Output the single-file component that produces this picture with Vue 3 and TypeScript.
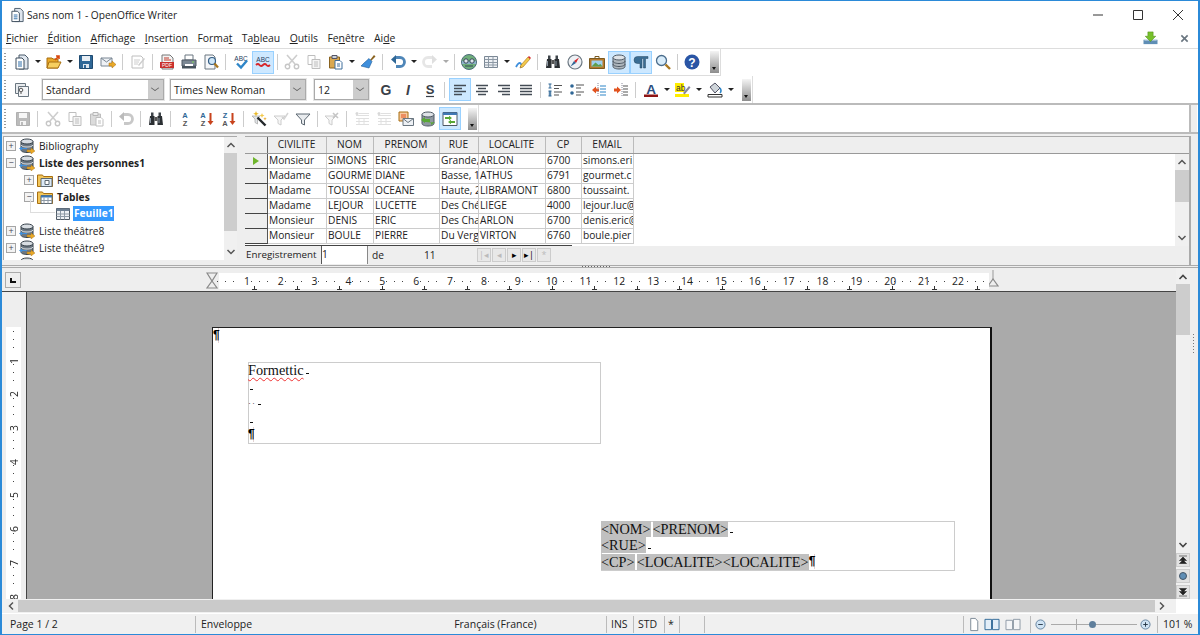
<template>
  <div class="win">
    <svg class="defs" xmlns="http://www.w3.org/2000/svg">
      <symbol id="new" viewBox="0 0 16 16"><path d="M5 1h6l3 3v11H5z" fill="#dfe6ee" stroke="#4a5a6a"/><path d="M2 4h6l2 2v9H2z" fill="#fff" stroke="#3c4c5c"/><path d="M4 8h4M4 10h4M4 12h4" stroke="#2d6ca8"/></symbol>
      <symbol id="open" viewBox="0 0 16 16"><path d="M1 4h5l1 1h5v9H1z" fill="#e9a928" stroke="#a86f10"/><path d="M1 14l2-6h12l-3 6z" fill="#f7cf5f" stroke="#a86f10"/><path d="M9 6l4-4M10 2h3v3" fill="none" stroke="#d9480f" stroke-width="1.6"/></symbol>
      <symbol id="save" viewBox="0 0 16 16"><path d="M1.500 1.500h13v13h-13z" fill="#2f6796" stroke="#1f4a70"/><path d="M4 2h8v5H4z" fill="#e8eef4"/><path d="M5 10h6v4H5z" fill="#dfe6ee"/><path d="M6 11h2v3H6z" fill="#2f6796"/></symbol>
      <symbol id="mail" viewBox="0 0 16 16"><path d="M1 4h11v8H1z" fill="#eef1f5" stroke="#7a8794"/><path d="M1 4l5.500 4L12 4" fill="none" stroke="#7a8794"/><path d="M9 9h3V7l4 3.500-4 3.500v-2H9z" fill="#e9a928" stroke="#a86f10" stroke-width=".5"/></symbol>
      <symbol id="edit" viewBox="0 0 16 16"><path d="M2 2h9l2 2v10H2z" fill="#fff" stroke="#666"/><path d="M4 6h6M4 8h5M4 10h4" stroke="#888"/><path d="M8 11l6-7 1 1-6 7z" fill="#888"/></symbol>
      <symbol id="pdf" viewBox="0 0 16 16"><path d="M3 1h8l3 3v11H3z" fill="#f3f3f3" stroke="#777"/><path d="M5 4h5M5 6h7" stroke="#c0392b"/><path d="M1 8h14v6H1z" fill="#c9302c"/><text x="8" y="13.300" class="svg-t" font-size="5" fill="#fff" text-anchor="middle">PDF</text></symbol>
      <symbol id="print" viewBox="0 0 16 16"><path d="M4 1h8v5H4z" fill="#fff" stroke="#6a7680"/><path d="M1 6h14v6H1z" fill="#7c8894" stroke="#4e5964"/><path d="M1 12h14v2.500H1z" fill="#46525c"/><path d="M4 10h8v2H4z" fill="#fff"/><path d="M11 8h2" stroke="#7ed957"/></symbol>
      <symbol id="preview" viewBox="0 0 16 16"><path d="M2 1h8l2 2v12H2z" fill="#f5f7fa" stroke="#6a7680"/><circle cx="9" cy="7" r="3.500" fill="#cfe6f7" stroke="#355e85" stroke-width="1.200"/><path d="M11.500 9.500l3.500 4" stroke="#a9761d" stroke-width="2.200"/></symbol>
      <symbol id="spell" viewBox="0 0 16 16"><text x="8" y="7" class="svg-t" font-size="6.500" fill="#28405c" text-anchor="middle">ABC</text><path d="M4 9.500l4 4 6-7" fill="none" stroke="#2f86c8" stroke-width="2.400"/></symbol>
      <symbol id="auto" viewBox="0 0 16 16"><text x="8" y="8" class="svg-t" font-size="6.500" fill="#28405c" text-anchor="middle">ABC</text><path d="M1 11q2-2 3.500 0t3.500 0 3.500 0 3.500 0" fill="none" stroke="#d7262b" stroke-width="1.800"/></symbol>
      <symbol id="cut" viewBox="0 0 16 16"><path d="M3 1l8 9M13 1L5 10" stroke="#889" stroke-width="1.600"/><circle cx="3.500" cy="12.500" r="2.200" fill="none" stroke="#778" stroke-width="1.400"/><circle cx="12.500" cy="12.500" r="2.200" fill="none" stroke="#778" stroke-width="1.400"/></symbol>
      <symbol id="copy" viewBox="0 0 16 16"><path d="M2 1.500h7v9H2z" fill="#fff" stroke="#3f6e9c"/><path d="M6 5.500h8v9H6z" fill="#dbe9f6" stroke="#3f6e9c"/><path d="M8 8h4M8 10h4M8 12h4" stroke="#3f6e9c"/></symbol>
      <symbol id="paste" viewBox="0 0 16 16"><path d="M1.500 3h10v11h-10z" fill="#d9a850" stroke="#8a6320"/><path d="M4 1.500h5v3H4z" fill="#ccd3da" stroke="#556"/><path d="M7 6.500h5l2 2v6.500H7z" fill="#fff" stroke="#3f6e9c"/><path d="M9 10h3M9 12h3" stroke="#3f6e9c"/></symbol>
      <symbol id="brush" viewBox="0 0 16 16"><path d="M10 6l4-5 1.500 1.500-4.500 4.500z" fill="#8a6320"/><path d="M9 4.500l3 3-3 6.500-8-2 3-3z" fill="#3f8fdc" stroke="#1f5c98" stroke-width=".6"/></symbol>
      <symbol id="undo" viewBox="0 0 16 16"><path d="M5 3.500h5a4.500 4.500 0 0 1 0 9H6" fill="none" stroke="#4f86b8" stroke-width="2.800"/><path d="M1 5.500l5-4.500v9z" fill="#2f6796"/></symbol>
      <symbol id="redo" viewBox="0 0 16 16"><path d="M11 3.500H6a4.500 4.500 0 0 0 0 9h4" fill="none" stroke="#c4c4c4" stroke-width="2.800"/><path d="M15 5.500L10 1v9z" fill="#b5b5b5"/></symbol>
      <symbol id="globe" viewBox="0 0 16 16"><circle cx="8" cy="8" r="7.500" fill="#6fae7a" stroke="#4c6a7a"/><path d="M1 7h14v3H1z" fill="#8db4c8"/><circle cx="5" cy="7" r="2.200" fill="#dfe6ee" stroke="#345"/><circle cx="11" cy="7" r="2.200" fill="#dfe6ee" stroke="#345"/><path d="M4 12h8" stroke="#345"/></symbol>
      <symbol id="table" viewBox="0 0 16 16"><path d="M1.500 2.500h13v11h-13z" fill="#eef1f5" stroke="#7a8794"/><path d="M1.500 5.500h13M1.500 8.500h13M1.500 11h13M5.500 2.500v11M10 2.500v11" stroke="#8d99a5" fill="none"/></symbol>
      <symbol id="draw" viewBox="0 0 16 16"><path d="M1 13q3-6 5-3t-1 3" fill="none" stroke="#3f8fdc" stroke-width="1.800"/><path d="M6 11l7-8 2 2-7 8-3 1z" fill="#f2c94c" stroke="#a86f10" stroke-width=".6"/><path d="M13 3l1-1 2 2-1 1z" fill="#d7262b"/></symbol>
      <symbol id="find" viewBox="0 0 16 16"><path d="M2 5h4.500v9H1zM9.500 5H14l1 9H9.500z" fill="#2b2f33"/><path d="M3 1.500h2.500V5H3zM10.500 1.500H13V5h-2.500z" fill="#3e444a"/><path d="M6.500 6h3v4h-3z" fill="#555"/><path d="M2.500 7v5M11 7v5" stroke="#8d99a5"/></symbol>
      <symbol id="nav" viewBox="0 0 16 16"><circle cx="8" cy="8" r="7" fill="#eef1f5" stroke="#6a7680" stroke-width="1.200"/><path d="M12 3.500L9 9 7 7z" fill="#d7262b"/><path d="M3.500 12.500L9 9 7 7z" fill="#2f6796"/></symbol>
      <symbol id="pic" viewBox="0 0 16 16"><path d="M6 2.500h4v2H6z" fill="#fff" stroke="#7a5a20"/><path d="M.5 4.500h15v10H.5z" fill="#b8792c" stroke="#7a5a20"/><path d="M2.500 6.500h11v6h-11z" fill="#9ed0ef"/><path d="M2.500 12.500l4-4 3 2.500 2-1 2 2.500z" fill="#5f9e4b"/></symbol>
      <symbol id="db" viewBox="0 0 16 16"><path d="M2 3.500v9c0 1.500 2.500 2.500 6 2.500s6-1 6-2.500v-9z" fill="#aeb6bd" stroke="#4e5964"/><ellipse cx="8" cy="3.500" rx="6" ry="2.500" fill="#dfe3e7" stroke="#4e5964"/><path d="M2 7c0 1.500 2.500 2.500 6 2.500S14 8.500 14 7M2 10c0 1.500 2.500 2.500 6 2.500s6-1 6-2.500" fill="none" stroke="#4e5964"/></symbol>
      <symbol id="pil" viewBox="0 0 16 16"><path d="M7 2.500H4.500a3.500 3.500 0 0 0 0 7H7V14h2V4.500h1.500V14h2V4.500H15v-2z" fill="#3a6d94" stroke="#27465f" stroke-width=".5"/></symbol>
      <symbol id="zoom" viewBox="0 0 16 16"><circle cx="6.500" cy="6.500" r="5" fill="#d8ecfa" stroke="#4b6d8c" stroke-width="1.300"/><path d="M10.500 10.500l4.500 4.500" stroke="#a9761d" stroke-width="2.400"/></symbol>
      <symbol id="help" viewBox="0 0 16 16"><circle cx="8" cy="8" r="7.500" fill="#2a55a5"/><text x="8" y="12.500" class="svg-t" font-size="12" font-weight="700" fill="#fff" text-anchor="middle">?</text></symbol>
      <symbol id="style" viewBox="0 0 16 16"><path d="M1.500 1.500h10v10h-10z" fill="#e8ebee" stroke="#6a7680"/><path d="M4.500 4.500h10v10h-10z" fill="#f4f5f7" stroke="#6a7680"/><circle cx="7" cy="8" r="1.800" fill="none" stroke="#555"/><path d="M7 10v2" stroke="#555"/></symbol>
      <symbol id="bold" viewBox="0 0 16 16"><text x="8" y="13" class="svg-t" font-size="14" font-weight="700" fill="#3a4048" text-anchor="middle">G</text></symbol>
      <symbol id="ital" viewBox="0 0 16 16"><text x="8" y="13" class="svg-t" font-size="14" font-style="italic" font-weight="700" fill="#3a4048" text-anchor="middle">I</text></symbol>
      <symbol id="stk" viewBox="0 0 16 16"><text x="8" y="12" class="svg-t" font-size="13" font-weight="700" fill="#3a4048" text-anchor="middle">S</text><path d="M4 14.500h8" stroke="#3a4048" stroke-width="1.200"/></symbol>
      <symbol id="al" viewBox="0 0 16 16"><path d="M2 3.500h12M2 6.500h8M2 9.500h12M2 12.500h8" stroke="#444c55" stroke-width="1.300"/></symbol>
      <symbol id="ac" viewBox="0 0 16 16"><path d="M2 3.500h12M4 6.500h8M2 9.500h12M4 12.500h8" stroke="#444c55" stroke-width="1.300"/></symbol>
      <symbol id="ar" viewBox="0 0 16 16"><path d="M2 3.500h12M6 6.500h8M2 9.500h12M6 12.500h8" stroke="#444c55" stroke-width="1.300"/></symbol>
      <symbol id="aj" viewBox="0 0 16 16"><path d="M2 3.500h12M2 6.500h12M2 9.500h12M2 12.500h12" stroke="#444c55" stroke-width="1.300"/></symbol>
      <symbol id="num" viewBox="0 0 16 16"><path d="M1.500 2h3M3 2v4M1.500 6h3M1.500 9h3M1.500 14h3M2.300 9v5M3.700 9v5" stroke="#2f6796" fill="none"/><path d="M7 3.500h8M7 6.500h5M7 10h8M7 13h5" stroke="#555" stroke-width="1.200"/></symbol>
      <symbol id="bul" viewBox="0 0 16 16"><circle cx="3" cy="4" r="1.800" fill="#2f6796"/><circle cx="3" cy="11" r="1.800" fill="#2f6796"/><path d="M7 3h8M7 6h5M7 10h8M7 13h5" stroke="#555" stroke-width="1.200"/></symbol>
      <symbol id="out" viewBox="0 0 16 16"><path d="M1 8l4-3.500v2h3v3H5v2z" fill="#e2531f"/><path d="M9 4h6M9 7h6M9 10h6M9 13h6" stroke="#2f86c8" stroke-width="1.200"/><path d="M7 1v14" stroke="#889" stroke-dasharray="1 1"/></symbol>
      <symbol id="ind" viewBox="0 0 16 16"><path d="M8 8L4 4.500v2H1v3h3v2z" fill="#e2531f"/><path d="M10 4h5M10 7h5M10 10h5M10 13h5" stroke="#555" stroke-width="1.200"/><path d="M9 1v14" stroke="#889" stroke-dasharray="1 1"/></symbol>
      <symbol id="color" viewBox="0 0 16 16"><text x="8" y="11.500" class="svg-t" font-size="13.500" font-weight="700" fill="#2b4c7e" text-anchor="middle">A</text><path d="M1 12.500h14V15H1z" fill="#8e1414"/></symbol>
      <symbol id="hl" viewBox="0 0 16 16"><path d="M0 12h14v3H0z" fill="#ffee00"/><path d="M0 1h9v9H0z" fill="#ffee00"/><text x="1" y="9" class="svg-t" font-size="8.500" fill="#333">ab</text><path d="M8 11l6-7 1.500 1.500-6 7z" fill="#889"/></symbol>
      <symbol id="bg" viewBox="0 0 16 16"><path d="M3 5l5-4 5 5-5 5z" fill="#cfd5da" stroke="#556"/><path d="M13 6q2 3 0 5" stroke="#2f86c8" stroke-width="1.600" fill="none"/><path d="M1 12.500h14V15H1z" fill="#fff" stroke="#333"/></symbol>
      <symbol id="saz" viewBox="0 0 16 16"><text x="8" y="7" class="svg-t" font-size="7.500" font-weight="700" fill="#2f6796" text-anchor="middle">A</text><text x="8" y="15" class="svg-t" font-size="7.500" font-weight="700" fill="#555" text-anchor="middle">Z</text></symbol>
      <symbol id="sad" viewBox="0 0 16 16"><text x="4" y="7" class="svg-t" font-size="7.500" font-weight="700" fill="#2f6796" text-anchor="middle">A</text><text x="4" y="15" class="svg-t" font-size="7.500" font-weight="700" fill="#555" text-anchor="middle">Z</text><path d="M10.500 2h2v8h2l-3 4-3-4h2z" fill="#c8431d"/></symbol>
      <symbol id="sda" viewBox="0 0 16 16"><text x="4" y="7" class="svg-t" font-size="7.500" font-weight="700" fill="#2f6796" text-anchor="middle">Z</text><text x="4" y="15" class="svg-t" font-size="7.500" font-weight="700" fill="#555" text-anchor="middle">A</text><path d="M10.500 2h2v8h2l-3 4-3-4h2z" fill="#c8431d"/></symbol>
      <symbol id="wand" viewBox="0 0 16 16"><path d="M1 5h8L6.500 8v5L4 11.500V8z" fill="#e2e5e8" stroke="#999" stroke-width=".6"/><path d="M6.500 6.500l8 8" stroke="#23272b" stroke-width="2.400"/><path d="M5 0l.8 2 2 .8-2 .8L5 5.500l-.8-1.900-2-.8 2-.8z" fill="#e9b928"/><path d="M11 2l.7 1.800 1.800.7-1.800.7L11 7l-.7-1.800-1.800-.7 1.800-.7z" fill="#f2c94c"/><path d="M14 6l.5 1.200 1.200.5-1.200.5-.5 1.200-.5-1.200-1.200-.5 1.200-.5z" fill="#e9a928"/></symbol>
      <symbol id="filt" viewBox="0 0 16 16"><path d="M1 3h14l-5.500 6v5l-3-1.500V9z" fill="#e8ebee" stroke="#5d6872"/></symbol>
      <symbol id="filtc" viewBox="0 0 16 16"><path d="M1 5h11L8 9v5l-3-1.500V9z" fill="#e8ebee" stroke="#888"/><path d="M9 6l2 2 4-6" fill="none" stroke="#999" stroke-width="1.500"/></symbol>
      <symbol id="filtx" viewBox="0 0 16 16"><path d="M1 5h11L8 9v5l-3-1.500V9z" fill="#e8ebee" stroke="#888"/><path d="M9 2l5 5M14 2L9 7" stroke="#777" stroke-width="1.600"/></symbol>
      <symbol id="list1" viewBox="0 0 16 16"><circle cx="3" cy="2.500" r="1.500" fill="#9aa5af"/><path d="M2 4.500h13M2 7.500h13M2 10.500h13M2 13.500h13M5 7.500v6M10 7.500v6" stroke="#b0b8c0"/><path d="M5 2.500h10" stroke="#b0b8c0"/></symbol>
      <symbol id="merge" viewBox="0 0 16 16"><path d="M1 1h9v9H1z" fill="#f7c9a0" stroke="#a86f10"/><path d="M3 4h5M3 6h5" stroke="#e2531f"/><path d="M5 7.500h10.500v7H5z" fill="#eef1f5" stroke="#6a7680"/><path d="M5 7.500l5 4 5.500-4" fill="none" stroke="#6a7680"/></symbol>
      <symbol id="dbg" viewBox="0 0 16 16"><path d="M2 3.500v9c0 1.500 2.500 2.500 6 2.500s6-1 6-2.500v-9z" fill="#8f98a0" stroke="#4e5964"/><ellipse cx="8" cy="3.500" rx="6" ry="2.500" fill="#dfe3e7" stroke="#4e5964"/><path d="M1 9l4-3v2h5v3H5v1zM15 11l-4 3v-2H6" fill="#59a836"/></symbol>
      <symbol id="togg" viewBox="0 0 16 16"><path d="M1 1.500h14v13H1z" fill="#fff" stroke="#4e5964"/><path d="M1 1.500h14v2.500H1z" fill="#3f78b5"/><path d="M3 6h4V4.800L10 7 7 9.200V8H3zM13 10H9V8.800L6 11l3 2.200V12h4z" fill="#59a836"/></symbol>
      <symbol id="dl" viewBox="0 0 16 16"><path d="M0 10h16v5H0z" fill="#5f8eb5"/><path d="M1 10.500h14" stroke="#c6d8e6"/><path d="M5 1h6v5h3l-6 6-6-6h3z" fill="#77c02c" stroke="#4d8a13" stroke-width=".6"/></symbol>
      <symbol id="tdb" viewBox="0 0 16 16"><path d="M2 3.500v8.500c0 1.500 2.500 2.500 6 2.500s6-1 6-2.500V3.500z" fill="#6d7882" stroke="#38424b"/><ellipse cx="8" cy="3.500" rx="6" ry="2.500" fill="#d9dee3" stroke="#38424b"/><path d="M2 7c1 1.500 3 2 6 2s5-.5 6-2" fill="none" stroke="#d9dee3"/><path d="M8 12h4v-2l4 3-4 3v-2H8z" fill="#e9a928" stroke="#a86f10" stroke-width=".4"/><path d="M8 10H3V8.500L0 10.500 3 12.500V11h5z" fill="#3f8fdc"/></symbol>
      <symbol id="fq" viewBox="0 0 16 16"><path d="M.5 3h5l1 1.500h9v10H.5z" fill="#f2c65a" stroke="#a86f10"/><path d="M4 6.500h11v8H4z" fill="#dbe9f6" stroke="#5d6872"/><path d="M8 8.500h4v4H8z" fill="#fff" stroke="#5d6872"/></symbol>
      <symbol id="ft" viewBox="0 0 16 16"><path d="M.5 3h5l1 1.500h9v10H.5z" fill="#f2c65a" stroke="#a86f10"/><path d="M4 6.500h11v8H4z" fill="#fff" stroke="#5d6872"/><path d="M4 6.500h11v2H4z" fill="#3f78b5"/><path d="M7 8.500v6M11 8.500v6M4 11.500h11" stroke="#8d99a5"/></symbol>
      <symbol id="fsheet" viewBox="0 0 16 16"><path d="M1.500 2.500h13v11h-13z" fill="#eef1f5" stroke="#4e5964"/><path d="M1.500 2.500h13v2.500h-13z" fill="#6d7f92"/><path d="M1.500 8h13M1.500 10.500h13M5.500 5v8.500M9.500 5v8.500" stroke="#8d99a5"/></symbol>
      <symbol id="page1" viewBox="0 0 16 16"><path d="M4.500 1.500h5l2.500 3v10H4.500z" fill="#fff" stroke="#7a8794"/></symbol>
      <symbol id="page2" viewBox="0 0 16 16"><path d="M.5 2.500h7v11h-7zM8.500 2.500h7v11h-7z" fill="#e3eef8" stroke="#2f6796"/></symbol>
      <symbol id="page3" viewBox="0 0 16 16"><path d="M.5 3.500h7v10h-7zM8.500 2.500h7v11h-7z" fill="#f4f5f7" stroke="#8d99a5"/></symbol>
    </svg>

    <header class="titlebar">
      <svg class="title-ic"><use href="#new" /></svg>
      <span class="title-txt">Sans nom 1 - OpenOffice Writer</span>
      <div class="winctl">
        <svg viewBox="0 0 12 12"><path d="M1 6h10" stroke="#333" /></svg>
        <svg viewBox="0 0 12 12"><path d="M1.500 1.500h9v9h-9z" fill="none" stroke="#333" /></svg>
        <svg viewBox="0 0 12 12"><path d="M1 1l10 10M11 1L1 11" stroke="#333" /></svg>
      </div>
    </header>

    <nav class="menubar">
      <span v-for="m in menus" :key="m.a + m.k" class="menu">{{ m.a }}<u>{{ m.k }}</u>{{ m.b }}</span>
      <svg class="menu-dl"><use href="#dl" /></svg>
      <svg class="menu-close" viewBox="0 0 10 10"><path d="M1.500 1.500l7 7M8.500 1.500l-7 7" stroke="#6a7680" stroke-width="1.800" /></svg>
    </nav>

    <div class="tbrow tb1">
      <div class="toolbar">
        <i class="grip"></i>
        <template v-for="(it, n) in bar1" :key="n">
          <span v-if="it.kind === 'sep'" class="sep"></span>
          <span v-else-if="it.kind === 'arrow'" class="arrow" :class="{ off: it.off }"></span>
          <span v-else class="btn" :class="{ on: it.on, off: it.off }"><svg><use :href="'#' + it.name" /></svg></span>
        </template>
        <span class="handle"></span>
      </div>
    </div>

    <div class="tbrow tb2">
      <div class="toolbar">
        <i class="grip"></i>
        <span class="btn"><svg><use href="#style" /></svg></span>
        <div class="combo c-style">Standard<span class="combo-btn"></span></div>
        <div class="combo c-font">Times New Roman<span class="combo-btn"></span></div>
        <div class="combo c-size">12<span class="combo-btn"></span></div>
        <template v-for="(it, n) in bar2" :key="n">
          <span v-if="it.kind === 'sep'" class="sep"></span>
          <span v-else-if="it.kind === 'arrow'" class="arrow"></span>
          <span v-else class="btn" :class="{ on: it.on }"><svg><use :href="'#' + it.name" /></svg></span>
        </template>
        <span class="handle"></span>
      </div>
    </div>

    <div class="tbrow tb3">
      <div class="toolbar">
        <i class="grip"></i>
        <template v-for="(it, n) in bar3" :key="n">
          <span v-if="it.kind === 'sep'" class="sep"></span>
          <span v-else class="btn" :class="{ on: it.on, off: it.off }"><svg><use :href="'#' + it.name" /></svg></span>
        </template>
        <span class="handle"></span>
      </div>
      <span class="tb3-end"></span>
    </div>

    <section class="beamer">
      <div class="tree">
        <div class="tree-list">
          <div v-for="(r, n) in tree" :key="n" class="tree-row" :class="['lv' + r.level, { strong: r.strong }]">
            <span v-if="r.exp" class="exp">{{ r.exp }}</span>
            <svg class="tree-ic"><use :href="'#' + r.icon" /></svg>
            <span v-if="r.label" class="tree-lbl" :class="{ sel: r.sel }">{{ r.label }}</span>
          </div>
        </div>
        <div class="sb">
          <svg class="chev" viewBox="0 0 10 10"><path d="M1.500 7L5 3.500 8.500 7" fill="none" stroke="#555" stroke-width="1.500" /></svg>
          <span class="sb-thumb tree-thumb"></span>
          <svg class="chev end" viewBox="0 0 10 10"><path d="M1.500 3L5 6.500 8.500 3" fill="none" stroke="#555" stroke-width="1.500" /></svg>
        </div>
      </div>

      <div class="grid">
        <div class="grid-head">
          <div class="gr">
            <span class="hcell"></span>
            <span v-for="c in cols" :key="c" class="hcell">{{ c }}</span>
          </div>
        </div>
        <div class="grid-body">
          <div class="rows">
            <div v-for="(row, n) in rows" :key="n" class="gr">
              <span class="handle-cell"><i v-if="n === 0" class="cur"></i></span>
              <span v-for="(v, k) in row" :key="k" class="cell">{{ v }}</span>
            </div>
            <div class="rows-line"></div>
          </div>
          <div class="sb grid-sb">
            <svg class="chev" viewBox="0 0 10 10"><path d="M1.500 7L5 3.500 8.500 7" fill="none" stroke="#555" stroke-width="1.500" /></svg>
            <span class="sb-thumb grid-thumb"></span>
            <svg class="chev end" viewBox="0 0 10 10"><path d="M1.500 3L5 6.500 8.500 3" fill="none" stroke="#555" stroke-width="1.500" /></svg>
          </div>
        </div>
        <div class="recnav">
          <span class="rec-lbl">Enregistrement</span>
          <span class="rec-input">1</span>
          <span class="rec-de">de</span>
          <span class="rec-n">11</span>
          <div class="rec-btns">
            <span class="off">|◂</span><span class="off">◂</span><span>▸</span><span>▸|</span><span class="off">*</span>
          </div>
        </div>
      </div>
      <span class="beamer-r"></span>
    </section>

    <div class="sash"><i></i></div>

    <div class="edit">
      <div class="edit-main">
        <div class="hruler-row">
          <span class="corner"><i></i></span>
          <svg class="hg" viewBox="0 0 12 18"><path d="M1 1h10L6 9zM6 9l5 7H1z" fill="#eee" stroke="#8a8a8a" stroke-width="1.200" /></svg>
          <div class="hruler">
            <div v-for="n in 22" :key="n" class="hcellr">
              <i></i><i></i><i></i>
              <span>{{ n }}</span>
            </div>
            <div class="hcellr tail"><i></i><i></i><i></i></div>
            <span v-for="x in tabs" :key="x" class="tab" :style="{ left: x + 'px' }"></span>
          </div>
          <svg class="hg-end" viewBox="0 0 12 18"><path d="M6 0v10" stroke="#999" /><path d="M1 16l5-7 5 7z" fill="#eee" stroke="#8a8a8a" stroke-width="1.200" /></svg>
        </div>
        <div class="work">
          <div class="vruler-col">
            <div class="vruler">
              <div v-for="n in 8" :key="n" class="vcell">
                <i></i><i></i><i></i>
                <span>{{ n }}</span>
              </div>
            </div>
          </div>
          <div class="doc">
            <div class="page">
              <div class="page-mark"><span class="pil">¶</span></div>
              <div class="frame f1">
                <p><span class="squig">Formettic</span><b class="brk"></b></p>
                <p><b class="brk"></b></p>
                <p class="dots">··<b class="brk"></b></p>
                <p><b class="brk"></b></p>
                <p><span class="pil">¶</span></p>
              </div>
              <div class="frame f2">
                <p><span class="fld">&lt;NOM&gt;</span><span class="spc"> </span><span class="fld">&lt;PRENOM&gt;</span><b class="brk"></b></p>
                <p><span class="fld">&lt;RUE&gt;</span><b class="brk"></b></p>
                <p><span class="fld">&lt;CP&gt;</span><span class="spc"> </span><span class="fld">&lt;LOCALITE&gt;&lt;LOCALITE&gt;</span><span class="pil">¶</span></p>
              </div>
            </div>
          </div>
        </div>
      </div>
      <div class="vsb">
        <svg class="chev" viewBox="0 0 10 10"><path d="M1.500 7L5 3.500 8.500 7" fill="none" stroke="#444" stroke-width="1.600" /></svg>
        <span class="sb-thumb vthumb"></span>
        <svg class="chev end" viewBox="0 0 10 10"><path d="M1.500 3L5 6.500 8.500 3" fill="none" stroke="#444" stroke-width="1.600" /></svg>
        <span class="pgbtn"><svg viewBox="0 0 10 10"><path d="M1 1h8M5 2L1.500 5.500h7zM5 5L1.500 8.500h7z" fill="#222" stroke="#222" stroke-width=".6" /></svg></span>
        <span class="pgbtn"><svg viewBox="0 0 10 10"><circle cx="5" cy="5" r="3.500" fill="#5f8eb5" stroke="#456" /></svg></span>
        <span class="pgbtn"><svg viewBox="0 0 10 10"><path d="M1 9h8M5 8L1.500 4.500h7zM5 5L1.500 1.500h7z" fill="#222" stroke="#222" stroke-width=".6" /></svg></span>
      </div>
      <div class="edge"><i></i></div>
    </div>

    <div class="hscroll">
      <svg class="chev" viewBox="0 0 10 10"><path d="M7 1.500L3.500 5 7 8.500" fill="none" stroke="#555" stroke-width="1.500" /></svg>
      <span class="hs-track"></span>
      <svg class="chev" viewBox="0 0 10 10"><path d="M3 1.500L6.500 5 3 8.500" fill="none" stroke="#555" stroke-width="1.500" /></svg>
    </div>

    <footer class="status">
      <span class="st st-page">Page 1 / 2</span>
      <span class="st st-style">Enveloppe<em>Français (France)</em></span>
      <span class="st st-ins">INS</span>
      <span class="st st-std">STD</span>
      <span class="st st-star">*</span>
      <span class="st st-blank"></span>
      <span class="st st-big"></span>
      <span class="st st-views">
        <svg><use href="#page1" /></svg><svg class="v2"><use href="#page2" /></svg><svg class="v3"><use href="#page3" /></svg>
      </span>
      <span class="st st-zoom">
        <svg class="zbtn" viewBox="0 0 12 12"><circle cx="6" cy="6" r="5" fill="#cfe3f4" stroke="#5f7f9c" /><path d="M3.500 6h5" stroke="#234" /></svg>
        <span class="slider"><i class="mid"></i><i class="knob"></i></span>
        <svg class="zbtn" viewBox="0 0 12 12"><circle cx="6" cy="6" r="5" fill="#cfe3f4" stroke="#5f7f9c" /><path d="M3.500 6h5M6 3.500v5" stroke="#234" /></svg>
      </span>
      <span class="st st-pct">101 %</span>
    </footer>
  </div>
</template>

<script setup lang="ts">
type Item = { kind: 'btn' | 'sep' | 'arrow'; name: string; on: boolean; off: boolean }

// compact toolbar notation: "|" separator, "v" dropdown, "!" pressed, "~" greyed out
function parseBar(src: string): Item[] {
  return src.split(' ').map((tok) => {
    if (tok === '|') return { kind: 'sep', name: '', on: false, off: false }
    if (tok === 'v' || tok === 'v~') return { kind: 'arrow', name: '', on: false, off: tok === 'v~' }
    return { kind: 'btn', name: tok.replace(/[!~]/g, ''), on: tok.endsWith('!'), off: tok.endsWith('~') }
  })
}

const bar1 = parseBar('new v open v save mail | edit~ | pdf print preview | spell auto! | cut~ copy~ paste v brush | undo v redo~ v~ | globe table v draw | find nav pic db! pil! zoom | help')
const bar2 = parseBar('bold ital stk | al! ac ar aj | num bul out ind | color v hl v bg v')
const bar3 = parseBar('save~ | cut~ copy~ paste~ | undo~ | find | saz sad sda | wand filtc~ filt | filtx~ | list1~ list1~ merge dbg togg!')

const menus = [
  { a: '', k: 'F', b: 'ichier' },
  { a: '', k: 'É', b: 'dition' },
  { a: '', k: 'A', b: 'ffichage' },
  { a: '', k: 'I', b: 'nsertion' },
  { a: 'Forma', k: 't', b: '' },
  { a: 'Ta', k: 'b', b: 'leau' },
  { a: '', k: 'O', b: 'utils' },
  { a: 'Fe', k: 'n', b: 'être' },
  { a: 'Ai', k: 'd', b: 'e' },
]

const tree = [
  { label: 'Bibliography', level: 0, exp: '+', icon: 'tdb' },
  { label: 'Liste des personnes1', level: 0, exp: '−', icon: 'tdb', strong: true },
  { label: 'Requêtes', level: 1, exp: '+', icon: 'fq' },
  { label: 'Tables', level: 1, exp: '−', icon: 'ft', strong: true },
  { label: 'Feuille1', level: 2, icon: 'fsheet', strong: true, sel: true },
  { label: 'Liste théâtre8', level: 0, exp: '+', icon: 'tdb' },
  { label: 'Liste théâtre9', level: 0, exp: '+', icon: 'tdb' },
  // next row is scrolled out: only the top of its icon shows
  { label: '', level: 0, icon: 'tdb' },
]

const cols = ['CIVILITE', 'NOM', 'PRENOM', 'RUE', 'LOCALITE', 'CP', 'EMAIL']
// values as far as the narrow columns show them
const rows = [
  ['Monsieur', 'SIMONS', 'ERIC', 'Grande,', 'ARLON', '6700', 'simons.eri'],
  ['Madame', 'GOURME', 'DIANE', 'Basse, 1', 'ATHUS', '6791', 'gourmet.c'],
  ['Madame', 'TOUSSAI', 'OCEANE', 'Haute, 2', 'LIBRAMONT', '6800', 'toussaint.'],
  ['Madame', 'LEJOUR', 'LUCETTE', 'Des Ché', 'LIEGE', '4000', 'lejour.luc@'],
  ['Monsieur', 'DENIS', 'ERIC', 'Des Cha', 'ARLON', '6700', 'denis.eric@'],
  ['Monsieur', 'BOULE', 'PIERRE', 'Du Verg', 'VIRTON', '6760', 'boule.pier'],
]

// tab stops drawn under the horizontal ruler, relative to its white strip
const tabs = Array.from({ length: 18 }, (_, n) => Math.round(33 + n * 42.5))
</script>

<style>
html, body { margin: 0; background: #fff; }
</style>

<style scoped>
.win {
  width: 1200px;
  height: 635px;
  box-sizing: border-box;
  border-top: 1px solid #2b8ad8;
  border-left: 2px solid #2b8ad8;
  border-right: 2px solid #2b8ad8;
  border-bottom: 1px solid #2b8ad8;
  background: #fff;
  display: flex;
  flex-direction: column;
  overflow: hidden;
  font-family: "Open Sans", "Noto Sans", sans-serif;
  font-size: 10.500px;
  color: #222;
}
.defs { display: none; }
.svg-t { font-family: "Liberation Sans", sans-serif; }

.titlebar { height: 27px; display: flex; align-items: center; padding-left: 8px; flex: none; }
.title-ic { width: 15px; height: 16px; }
.title-txt { margin-left: 2px; font-size: 10.200px; color: #222; }
.winctl { margin-left: auto; display: flex; margin-right: 14px; gap: 28px; }
.winctl svg { width: 12px; height: 12px; }

.menubar { height: 20px; box-sizing: content-box; flex: none; display: flex; align-items: center; padding-left: 4px; gap: 9.400px; border-bottom: 1px solid #ddd; }
.menu { font-size: 10.400px; color: #222; }
.menu u { text-decoration: underline; }
.menu-dl { width: 15px; height: 14px; margin-left: auto; }
.menu-close { width: 9px; height: 9px; margin-left: 13px; margin-right: 9px; }

.tbrow { display: flex; flex: none; }
.tb1 { height: 27px; }
.tb2 { height: 29px; }
.tb3 { height: 29px; }
.toolbar { display: flex; align-items: center; position: relative; box-sizing: border-box; padding-left: 9px; }
.tb1 .toolbar { width: 719px; border-right: 1px solid #ddd; border-bottom: 1px solid #ddd; }
.tb2 { border-bottom: 2px solid #bbb; box-sizing: border-box; }
.tb2 .toolbar { width: 751px; border-right: 1px solid #ddd; }
.tb3 { border-bottom: 2px solid #bbb; box-sizing: border-box; }
.tb3 .toolbar { width: 477px; border-right: 1px solid #ddd; padding-left: 10px; }
.tb3-end { margin-left: auto; width: 6px; margin-right: 1px; border-left: 2px solid #bbb; background: #eee; }

.grip { position: absolute; left: 2px; top: 4px; bottom: 4px; width: 2px; background: repeating-linear-gradient(#999 0 1px, transparent 1px 3px); }
.btn { width: 22px; height: 23px; display: flex; align-items: center; justify-content: center; flex: none; box-sizing: border-box; }
.btn svg { width: 16px; height: 16px; }
.btn.on { background: #cde8ff; border: 1px solid #99d1ff; }
.btn.off svg { opacity: .42; filter: grayscale(1); }
.sep { width: 7.500px; height: 20px; flex: none; position: relative; }
.sep::before { content: ""; position: absolute; left: 3px; top: 2px; bottom: 2px; width: 1px; background: #ccc; }
.arrow { width: 10px; height: 20px; flex: none; position: relative; }
.arrow::before { content: ""; position: absolute; left: 2px; top: 8px; border: 3px solid transparent; border-top: 3.500px solid #222; border-bottom: 0; }
.arrow.off::before { border-top-color: #aaa; }
.handle { width: 9px; height: 22px; margin-left: auto; margin-right: 1px; background: linear-gradient(#f4f4f4, #8d8d8d); position: relative; flex: none; }
.handle::after { content: ""; position: absolute; left: 2px; bottom: 3px; border: 2.500px solid transparent; border-top: 3px solid #111; border-bottom: 0; }

.combo { height: 21px; box-sizing: border-box; border: 1px solid #aaa; box-shadow: 0 0 0 1px #e6e6e6; display: flex; align-items: center; justify-content: space-between; padding-left: 3px; font-size: 10.500px; flex: none; }
.c-style { width: 122px; margin-left: 9px; }
.c-font { width: 136px; margin-left: 6px; }
.c-size { width: 55px; margin-left: 8px; margin-right: 6px; }
.combo-btn { width: 15px; height: 100%; background: #ccc; position: relative; flex: none; }
.combo-btn::after { content: ""; position: absolute; left: 4px; top: 5px; width: 5px; height: 5px; border-right: 1px solid #666; border-bottom: 1px solid #666; transform: scale(1, .7) rotate(45deg); }

.beamer { height: 131px; flex: none; display: flex; background: #eee; box-sizing: border-box; padding-top: 2px; }
.tree { width: 234px; margin-left: 1px; height: 124px; display: flex; background: #fff; border-top: 1px solid #aaa; border-left: 1px solid #aaa; box-sizing: border-box; flex: none; }
.tree-list { flex: 1; overflow: hidden; }
.tree-row { height: 17px; display: flex; align-items: center; position: relative; font-size: 10.200px; }
.tree-row.strong { font-weight: 700; }
.tree-row.lv0 { padding-left: 15px; }
.tree-row.lv1 { padding-left: 33px; }
.tree-row.lv2 { padding-left: 51px; }
.lv2::before { content: ""; position: absolute; left: 26px; top: -6px; width: 24px; height: 13px; border-left: 1px solid #ddd; border-bottom: 1px solid #ddd; }
.exp { position: absolute; top: 4px; width: 8px; height: 8px; border: 1px solid #a5a5a5; background: #f3f3f3; color: #445; font-size: 9px; line-height: 8px; text-align: center; font-weight: 400; }
.lv0 .exp { left: 2px; }
.lv1 .exp { left: 20px; }
.tree-ic { width: 16px; height: 16px; flex: none; }
.tree-lbl { margin-left: 3px; white-space: nowrap; padding: 0 1px; }
.tree-lbl.sel { background: #3399ff; color: #fff; line-height: 15px; margin-left: 2px; }

.sb { width: 13px; flex: none; background: #f0f0f0; display: flex; flex-direction: column; align-items: center; }
.chev { width: 10px; height: 10px; flex: none; }
.sb .chev { margin-top: 3px; }
.sb .chev.end { margin-top: auto; margin-bottom: 3px; }
.sb-thumb { width: 100%; background: #cdcdcd; margin-top: 3px; flex: none; display: block; }
.tree-thumb { height: 78px; }

.grid { margin-left: 8px; width: 946px; height: 129px; box-sizing: border-box; border-top: 1px solid #aaa; border-right: 2px solid #aaa; display: flex; flex-direction: column; flex: none; }
.gr { display: grid; grid-template-columns: 22.500px 59px 47px 66px 39px 67px 36px 52px; }
.grid-head { height: 16px; flex: none; border-bottom: 1px solid #999; background: #eee; }
.hcell { text-align: center; border-right: 1px solid #bbb; font-size: 10.200px; line-height: 15px; overflow: hidden; white-space: nowrap; height: 16px; box-sizing: border-box; }
.hcell:first-child { border-right-color: #666; }
.grid-body { height: 92px; flex: none; display: flex; background: #fff; }
.rows { flex: 1; height: 92px; overflow: hidden; }
.rows-line { width: 327px; height: 1px; margin-top: 1px; background: #444; }
.grid-sb { height: 92px; width: 14px; }
.grid-thumb { height: 32px; }
.handle-cell { background: #eee; border-right: 1px solid #555; border-bottom: 1px solid #444; height: 15px; box-sizing: border-box; display: flex; align-items: center; justify-content: center; }
.cur { border: 4px solid transparent; border-left: 6px solid #6fb52c; border-right: 0; }
.cell { height: 15px; box-sizing: border-box; border-right: 1px solid #ccc; border-bottom: 1px solid #ccc; padding-left: 1.500px; font-size: 10.200px; line-height: 13px; overflow: hidden; white-space: nowrap; }
.recnav { flex: 1; display: flex; align-items: flex-start; background: #eee; font-size: 10.200px; line-height: 18px; }
.rec-lbl { width: 76px; padding-left: 1px; flex: none; box-sizing: border-box; font-size: 9.800px; }
.rec-input { width: 47px; height: 18px; line-height: 17px; background: #fff; border-left: 1px solid #555; border-right: 1px solid #888; box-sizing: border-box; flex: none; }
.rec-de { margin-left: 4px; width: 52px; flex: none; }
.rec-n { width: 53px; flex: none; }
.rec-btns { display: flex; gap: 1px; margin-top: 2px; }
.rec-btns span { width: 14px; height: 14px; background: #e8e8e8; border: 1px solid #ccc; box-sizing: border-box; text-align: center; font-size: 9px; line-height: 12px; color: #000; }
.rec-btns .off { color: #bbb; }
.beamer-r { width: 6px; flex: none; }

.sash { height: 3px; flex: none; background: #eee; border-top: 1px solid #aaa; box-sizing: border-box; border-bottom: 1px solid #aaa; display: flex; justify-content: center; }
.sash i { width: 30px; margin-left: -6px; height: 1px; background: repeating-linear-gradient(90deg, #666 0 1px, transparent 1px 3px); }

.edit { flex: 1; display: flex; min-height: 0; background: #eee; }
.edit-main { width: 1174px; display: flex; flex-direction: column; flex: none; }
.hruler-row { height: 24px; flex: none; background: #eee; display: flex; align-items: flex-start; border-bottom: 1px solid #444; box-sizing: border-box; padding-top: 5px; position: relative; }
.corner { width: 16px; height: 16px; margin-left: 3px; border: 1px solid #aaa; box-sizing: border-box; flex: none; display: flex; align-items: center; justify-content: center; margin-top: -1px; }
.corner i { width: 6px; height: 5px; border-left: 2px solid #111; border-bottom: 2px solid #111; box-sizing: border-box; }
.hg { width: 12px; height: 18px; margin-left: 185px; flex: none; margin-top: -1px; }
.hruler { display: flex; height: 16px; background: #fff; position: relative; flex: none; margin-left: 1px; }
.hcellr { width: 33.860px; display: flex; align-items: center; justify-content: flex-end; flex: none; }
.hcellr i { width: 1px; height: 1px; background: #444; margin-right: 7px; flex: none; }
.hcellr span { width: 12px; text-align: center; font-size: 10.400px; color: #222; flex: none; line-height: 14px; }
.hcellr.tail { width: 25px; justify-content: flex-start; padding-left: 3px; box-sizing: border-box; }
.tab { position: absolute; top: 14px; width: 5px; height: 3px; border-bottom: 1px solid #333; box-sizing: border-box; }
.tab::before { content: ""; position: absolute; left: 2px; top: -1px; width: 1px; height: 3px; background: #333; }
.hg-end { width: 12px; height: 18px; margin-left: -2px; margin-top: -3px; flex: none; }

.work { flex: 1; display: flex; min-height: 0; }
.vruler-col { width: 24px; flex: none; background: #eee; overflow: hidden; }
.vruler { width: 15px; margin-left: 4px; margin-top: 35px; background: #fff; padding-top: 6px; height: 300px; box-sizing: border-box; }
.vcell { height: 33.700px; display: flex; flex-direction: column; align-items: center; justify-content: flex-end; }
.vcell i { width: 1px; height: 1px; background: #444; margin-bottom: 7px; flex: none; }
.vcell span { height: 12px; writing-mode: vertical-rl; transform: rotate(180deg); font-size: 10.400px; line-height: 12px; text-align: center; flex: none; }

.doc { flex: 1; background: #aaa; border-left: 1px solid #444; padding: 35px 0 0 185px; box-sizing: border-box; overflow: hidden; }
.page { width: 780px; height: 300px; box-sizing: border-box; background: #fff; border-top: 1px solid #222; border-left: 1px solid #222; border-right: 2px solid #111; font-family: "Liberation Serif", serif; font-size: 14.300px; color: #111; }
.pil { display: inline-block; width: 7px; font-family: "Liberation Sans", sans-serif; font-size: 12px; font-weight: 700; color: #000; line-height: 15px; background: linear-gradient(90deg, transparent 72%, #e2d2d2 72% 90%, transparent 90%); vertical-align: top; }
.page-mark { height: 17px; line-height: 15px; }
.frame { border: 1px solid #ccc; box-sizing: border-box; }
.frame p { margin: 0 0 0 -1px; height: 16.300px; line-height: 16.300px; white-space: nowrap; }
.frame p:first-child { margin-top: -1px; }
.f1 { width: 353px; height: 82px; margin: 17px 0 0 35px; }
.f2 { width: 354px; height: 50px; margin: 77px 0 0 388px; }
.squig { text-decoration: underline wavy #e33; text-decoration-thickness: 1px; text-underline-offset: 2px; }
.brk { display: inline-block; width: 3px; height: 1px; margin-left: 2px; border-bottom: 1px solid #111; vertical-align: 1px; }
.dots { font-size: 9px; letter-spacing: 1px; color: #333; }
.fld { background: #c0c0c0; }
.spc { padding-right: 2px; }

.vsb { width: 14px; flex: none; background: #f0f0f0; display: flex; flex-direction: column; align-items: center; }
.vsb .chev { margin-top: 4px; }
.vsb .chev.end { margin-top: auto; margin-bottom: 1px; }
.vthumb { height: 51px; margin-top: 2px; }
.pgbtn { width: 14px; height: 14px; box-sizing: border-box; background: #e2e2e2; border: 1px solid #ccc; margin-top: 2px; flex: none; display: flex; align-items: center; justify-content: center; }
.pgbtn svg { width: 10px; height: 10px; }
.edge { flex: 1; background: #eee; position: relative; }
.edge i { position: absolute; left: 3px; top: 66px; width: 1px; height: 20px; background: repeating-linear-gradient(#777 0 1px, transparent 1px 3px); }

.hscroll { height: 14px; flex: none; display: flex; align-items: center; background: #f0f0f0; width: 1174px; box-sizing: border-box; padding: 0 9px 0 4px; }
.hs-track { flex: 1; height: 12px; background: #cacaca; margin: 0 2px; }
.status { height: 20px; flex: none; margin-top: 1px; display: flex; background: #f0f0f0; align-items: center; font-size: 10.500px; }
.st { height: 17px; line-height: 17px; border-right: 1px solid #bbb; box-sizing: border-box; flex: none; white-space: nowrap; }
.st-page { width: 194px; padding-left: 8px; }
.st-style { width: 411px; padding-left: 5px; display: flex; }
.st-style em { font-style: normal; margin-left: 202px; }
.st-ins { width: 27px; padding-left: 4px; }
.st-std { width: 31px; padding-left: 4px; }
.st-star { width: 15px; padding-left: 3px; }
.st-blank { width: 25px; }
.st-big { width: 259px; }
.st-views { width: 67px; display: flex; align-items: center; padding-left: 2px; }
.st-views svg { width: 16px; height: 15px; flex: none; }
.st-views .v2 { margin-left: 2px; }
.st-views .v3 { margin-left: 5px; }
.st-zoom { width: 127px; display: flex; align-items: center; padding-left: 4px; }
.zbtn { width: 11px; height: 11px; flex: none; }
.slider { width: 86px; height: 1px; background: #aaa; margin: 0 3px 0 5px; position: relative; flex: none; }
.slider .mid { position: absolute; left: 25px; top: -5px; width: 1px; height: 11px; background: #aaa; }
.slider .knob { position: absolute; left: 38px; top: -3px; width: 7px; height: 7px; border-radius: 50%; background: #5f7f9c; }
.st-pct { border: 0; padding-left: 5px; }
</style>
